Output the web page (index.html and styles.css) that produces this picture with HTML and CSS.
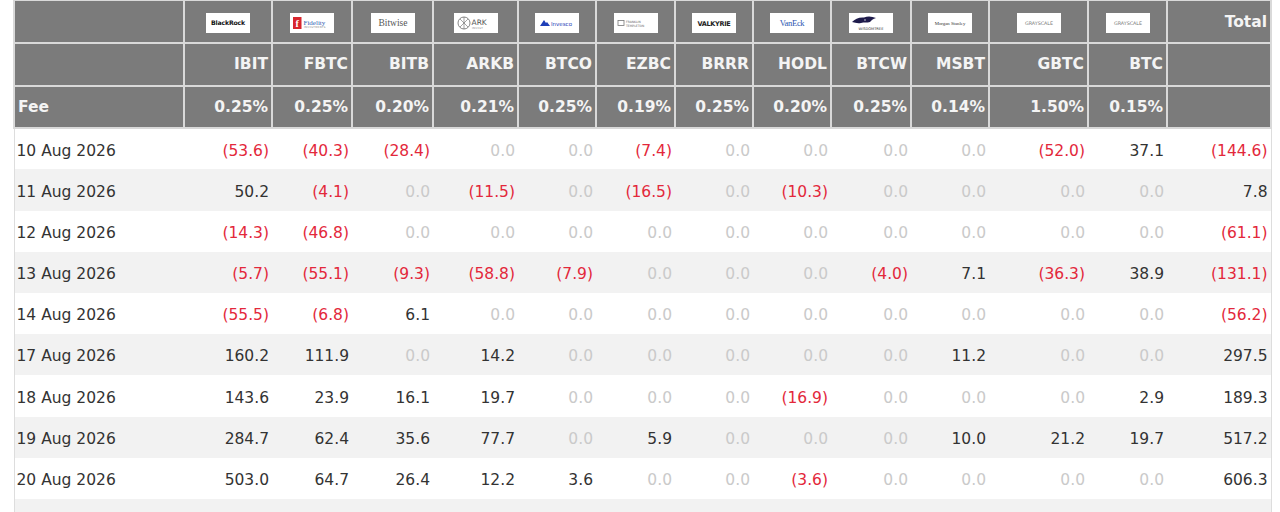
FILE: index.html
```html
<!DOCTYPE html>
<html lang="en">
<head>
<meta charset="utf-8">
<title>Bitcoin ETF Flows</title>
<link rel="stylesheet" href="styles.css">
</head>
<body>
<div class="wrap">
<table class="flows">
<colgroup>
<col><col><col><col><col><col><col><col><col><col><col><col><col><col>
</colgroup>
<thead>
<tr class="logos">
<th></th>
<th><svg class="logo" viewBox="0 0 44 20"><rect width="44" height="20" fill="#fff"/><text class="l-br" x="22" y="12.3" text-anchor="middle">BlackRock</text></svg></th>
<th><svg class="logo" viewBox="0 0 44 20"><rect width="44" height="20" fill="#fff"/><rect x="3" y="4" width="8.5" height="12" fill="#d8262e"/><text class="l-ff" x="7.2" y="13.5" text-anchor="middle">f</text><text class="l-fid" x="13.5" y="11.5">Fidelity</text><text class="l-tiny" x="14" y="15">INVESTMENTS</text></svg></th>
<th><svg class="logo" viewBox="0 0 44 20"><rect width="44" height="20" fill="#fff"/><text class="l-bw" x="22" y="13.3" text-anchor="middle">Bitwise</text></svg></th>
<th><svg class="logo" viewBox="0 0 44 20"><rect width="44" height="20" fill="#fff"/><circle cx="10" cy="10" r="6" fill="none" stroke="#666" stroke-width="0.8"/><path d="M6 6 L14 14 M14 6 L6 14 M10 4 L10 16" stroke="#666" stroke-width="0.6"/><text class="l-ark" x="17.5" y="11.5">ARK</text><text class="l-tiny" x="18" y="16">INVEST</text></svg></th>
<th><svg class="logo" viewBox="0 0 44 20"><rect width="44" height="20" fill="#fff"/><path d="M5 13 L9 7 L11 10 L12 9 L15 13 Z" fill="#1f3fb8"/><text class="l-inv" x="16" y="12.5">Invesco</text></svg></th>
<th><svg class="logo" viewBox="0 0 44 20"><rect width="44" height="20" fill="#fff"/><rect x="4" y="7.5" width="6" height="5" fill="none" stroke="#777" stroke-width="0.8"/><text class="l-fr" x="12" y="9.5">FRANKLIN</text><text class="l-fr" x="12" y="13.5">TEMPLETON</text></svg></th>
<th><svg class="logo" viewBox="0 0 44 20"><rect width="44" height="20" fill="#fff"/><text class="l-val" x="22" y="12.6" text-anchor="middle">VALKYRIE</text></svg></th>
<th><svg class="logo" viewBox="0 0 44 20"><rect width="44" height="20" fill="#fff"/><text class="l-ve" x="22" y="13.3" text-anchor="middle">VanEck</text></svg></th>
<th><svg class="logo" viewBox="0 0 44 20"><rect width="44" height="20" fill="#fff"/><path d="M3 9 C6 6 10 4 15 4.5 C19 3 23 3.5 27 5 C24 6 22 7.5 21 9 C18 10 15 9 12 10 C9 10.5 6 10 3 9 Z" fill="#1e1b4b"/><circle cx="16" cy="7" r="0.7" fill="#fff"/><text class="l-wt" x="22" y="16.5" text-anchor="middle">WISDOMTREE</text></svg></th>
<th><svg class="logo" viewBox="0 0 44 20"><rect width="44" height="20" fill="#fff"/><text class="l-ms" x="22" y="11.7" text-anchor="middle">Morgan Stanley</text></svg></th>
<th><svg class="logo" viewBox="0 0 44 20"><rect width="44" height="20" fill="#fff"/><text class="l-gs" x="22" y="11.8" text-anchor="middle">GRAYSCALE</text></svg></th>
<th><svg class="logo" viewBox="0 0 44 20"><rect width="44" height="20" fill="#fff"/><text class="l-gs" x="22" y="11.8" text-anchor="middle">GRAYSCALE</text></svg></th>
<th class="total">Total</th>
</tr>
<tr class="tickers">
<th></th><th>IBIT</th><th>FBTC</th><th>BITB</th><th>ARKB</th><th>BTCO</th><th>EZBC</th><th>BRRR</th><th>HODL</th><th>BTCW</th><th>MSBT</th><th>GBTC</th><th>BTC</th><th></th>
</tr>
<tr class="fees">
<th class="lbl">Fee</th><th>0.25%</th><th>0.25%</th><th>0.20%</th><th>0.21%</th><th>0.25%</th><th>0.19%</th><th>0.25%</th><th>0.20%</th><th>0.25%</th><th>0.14%</th><th>1.50%</th><th>0.15%</th><th></th>
</tr>
</thead>
<tbody>
<tr><td>10 Aug 2026</td><td class="n">(53.6)</td><td class="n">(40.3)</td><td class="n">(28.4)</td><td class="z">0.0</td><td class="z">0.0</td><td class="n">(7.4)</td><td class="z">0.0</td><td class="z">0.0</td><td class="z">0.0</td><td class="z">0.0</td><td class="n">(52.0)</td><td>37.1</td><td class="n">(144.6)</td></tr>
<tr><td>11 Aug 2026</td><td>50.2</td><td class="n">(4.1)</td><td class="z">0.0</td><td class="n">(11.5)</td><td class="z">0.0</td><td class="n">(16.5)</td><td class="z">0.0</td><td class="n">(10.3)</td><td class="z">0.0</td><td class="z">0.0</td><td class="z">0.0</td><td class="z">0.0</td><td>7.8</td></tr>
<tr><td>12 Aug 2026</td><td class="n">(14.3)</td><td class="n">(46.8)</td><td class="z">0.0</td><td class="z">0.0</td><td class="z">0.0</td><td class="z">0.0</td><td class="z">0.0</td><td class="z">0.0</td><td class="z">0.0</td><td class="z">0.0</td><td class="z">0.0</td><td class="z">0.0</td><td class="n">(61.1)</td></tr>
<tr><td>13 Aug 2026</td><td class="n">(5.7)</td><td class="n">(55.1)</td><td class="n">(9.3)</td><td class="n">(58.8)</td><td class="n">(7.9)</td><td class="z">0.0</td><td class="z">0.0</td><td class="z">0.0</td><td class="n">(4.0)</td><td>7.1</td><td class="n">(36.3)</td><td>38.9</td><td class="n">(131.1)</td></tr>
<tr><td>14 Aug 2026</td><td class="n">(55.5)</td><td class="n">(6.8)</td><td>6.1</td><td class="z">0.0</td><td class="z">0.0</td><td class="z">0.0</td><td class="z">0.0</td><td class="z">0.0</td><td class="z">0.0</td><td class="z">0.0</td><td class="z">0.0</td><td class="z">0.0</td><td class="n">(56.2)</td></tr>
<tr><td>17 Aug 2026</td><td>160.2</td><td>111.9</td><td class="z">0.0</td><td>14.2</td><td class="z">0.0</td><td class="z">0.0</td><td class="z">0.0</td><td class="z">0.0</td><td class="z">0.0</td><td>11.2</td><td class="z">0.0</td><td class="z">0.0</td><td>297.5</td></tr>
<tr><td>18 Aug 2026</td><td>143.6</td><td>23.9</td><td>16.1</td><td>19.7</td><td class="z">0.0</td><td class="z">0.0</td><td class="z">0.0</td><td class="n">(16.9)</td><td class="z">0.0</td><td class="z">0.0</td><td class="z">0.0</td><td>2.9</td><td>189.3</td></tr>
<tr><td>19 Aug 2026</td><td>284.7</td><td>62.4</td><td>35.6</td><td>77.7</td><td class="z">0.0</td><td>5.9</td><td class="z">0.0</td><td class="z">0.0</td><td class="z">0.0</td><td>10.0</td><td>21.2</td><td>19.7</td><td>517.2</td></tr>
<tr><td>20 Aug 2026</td><td>503.0</td><td>64.7</td><td>26.4</td><td>12.2</td><td>3.6</td><td class="z">0.0</td><td class="z">0.0</td><td class="n">(3.6)</td><td class="z">0.0</td><td class="z">0.0</td><td class="z">0.0</td><td class="z">0.0</td><td>606.3</td></tr>
<tr class="more"><td></td><td></td><td></td><td></td><td></td><td></td><td></td><td></td><td></td><td></td><td></td><td></td><td></td><td></td></tr>
</tbody>
</table>
</div>
</body>
</html>
```

FILE: styles.css
```css
html, body {
  margin: 0;
  padding: 0;
  background: #ffffff;
}

.wrap {
  padding: 0 0 0 13px;
}

.flows {
  width: 1257px;
  table-layout: fixed;
  border-collapse: collapse;
  font-family: "DejaVu Sans", "Liberation Sans", sans-serif;
  font-size: 15.5px;
  color: #333333;
  border-left: 1px solid #dddddd;
  border-right: 1px solid #dddddd;
}

.flows col:nth-child(1) { width: 170px; }
.flows col:nth-child(2) { width: 88px; }
.flows col:nth-child(3) { width: 80px; }
.flows col:nth-child(4) { width: 81px; }
.flows col:nth-child(5) { width: 85px; }
.flows col:nth-child(6) { width: 78px; }
.flows col:nth-child(7) { width: 79px; }
.flows col:nth-child(8) { width: 78px; }
.flows col:nth-child(9) { width: 78px; }
.flows col:nth-child(10) { width: 80px; }
.flows col:nth-child(11) { width: 78px; }
.flows col:nth-child(12) { width: 99px; }
.flows col:nth-child(13) { width: 79px; }
.flows col:nth-child(14) { width: 104px; }

.flows th {
  background: #7b7b7b;
  color: #f4f4f4;
  font-weight: bold;
  text-align: right;
  vertical-align: middle;
  border: 2px solid #d9d9d9;
  padding: 0 3px;
  height: 42.6px;
  box-sizing: border-box;
  white-space: nowrap;
}

.flows tr.logos th {
  border-top: 1px solid #d9d9d9;
  text-align: center;
}

.flows tr.logos th.total {
  text-align: right;
}

.flows .fees th.lbl {
  text-align: left;
}

.logo {
  display: block;
  width: 44px;
  height: 20px;
  margin: 3px auto 0;
}

.flows td {
  height: 41.2px;
  padding: 3px 3px 0;
  text-align: right;
  vertical-align: middle;
  white-space: nowrap;
  box-sizing: border-box;
}

.flows td:first-child {
  text-align: left;
  padding-left: 2px;
}

.flows tbody tr:nth-child(even) td {
  background: #f2f2f2;
}

.flows td.n {
  color: #e3283b;
}

.flows td.z {
  color: #cacaca;
}

/* logo text */
.l-br { font: bold 6.2px "DejaVu Sans", sans-serif; fill: #111; letter-spacing: -0.2px; }
.l-ff { font: bold 10px "Liberation Serif", serif; fill: #fff; }
.l-fid { font: 7px "Liberation Serif", serif; fill: #2f64b4; }
.l-tiny { font: 2.6px "DejaVu Sans", sans-serif; fill: #888; letter-spacing: 0.3px; }
.l-bw { font: 9.5px "Liberation Serif", serif; fill: #555; }
.l-ark { font: 7.5px "DejaVu Sans", sans-serif; fill: #555; }
.l-inv { font: 5.5px "DejaVu Sans", sans-serif; fill: #2540b8; }
.l-fr { font: 3px "DejaVu Sans", sans-serif; fill: #666; }
.l-val { font: bold 6.5px "DejaVu Sans", sans-serif; fill: #222; letter-spacing: -0.3px; }
.l-ve { font: 8.5px "Liberation Serif", serif; fill: #2b55b0; letter-spacing: -0.3px; }
.l-wt { font: 3.6px "DejaVu Sans", sans-serif; fill: #333; }
.l-ms { font: 4.8px "Liberation Serif", serif; fill: #333; }
.l-gs { font: 4.8px "DejaVu Sans", sans-serif; fill: #777; }
```
